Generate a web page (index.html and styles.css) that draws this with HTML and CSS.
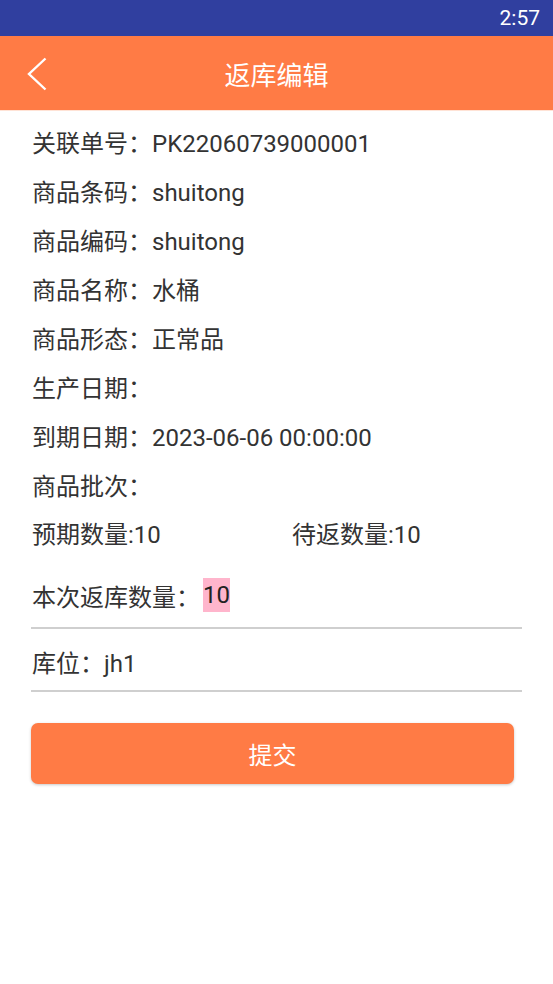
FILE: index.html
```html
<!DOCTYPE html>
<html lang="zh">
<head>
<meta charset="utf-8">
<title>返库编辑</title>
<link rel="stylesheet" href="styles.css">
</head>
<body>
<div class="status"><span class="time">2:57</span></div>
<header class="toolbar">
  <svg class="back" width="24" height="36" viewBox="0 0 24 36"><polyline points="18.5,2.5 2,18 18.5,33.5" fill="none" stroke="#fff" stroke-width="2.4"/></svg>
  <h1 class="title">返库编辑</h1>
</header>
<div class="divider"></div>
<main class="content">
  <div class="row">关联单号：PK22060739000001</div>
  <div class="row">商品条码：shuitong</div>
  <div class="row">商品编码：shuitong</div>
  <div class="row">商品名称：水桶</div>
  <div class="row">商品形态：正常品</div>
  <div class="row">生产日期：</div>
  <div class="row">到期日期：2023-06-06 00:00:00</div>
  <div class="row">商品批次：</div>
  <div class="row qty"><span>预期数量:10</span><span>待返数量:10</span></div>
  <div class="field first"><span class="label">本次返库数量：</span><span class="sel">10</span></div>
  <div class="field second"><span class="label">库位：jh1</span></div>
  <button class="submit">提交</button>
</main>
</body>
</html>
```

FILE: styles.css
```css
html, body {
  margin: 0;
  padding: 0;
  background: #fff;
}
body {
  width: 553px;
  height: 984px;
  font-family: Roboto, "Noto Sans CJK SC", sans-serif;
  color: #333;
}
.status {
  height: 36px;
  background: #303f9f;
  display: flex;
  justify-content: flex-end;
  align-items: center;
  padding-right: 13px;
}
.time {
  color: #fff;
  font-size: 21px;
  font-family: Roboto, sans-serif;
}
.toolbar {
  height: 74px;
  background: #ff7b45;
  position: relative;
  display: flex;
  align-items: center;
  justify-content: center;
}
.back {
  position: absolute;
  left: 27px;
  top: 20px;
}
.title {
  margin: 0;
  font-weight: normal;
  font-size: 26px;
  color: #fff;
  font-family: "Noto Sans CJK SC", sans-serif;
}
.divider {
  height: 1px;
  background: #ffe3d6;
}
.content {
  padding: 8.5px 31px 0 31px;
  display: flex;
  flex-direction: column;
}
.row {
  height: 49px;
  line-height: 49px;
  font-size: 24px;
  padding-left: 1px;
  white-space: nowrap;
}
.qty {
  height: 47px;
  line-height: 47px;
  display: grid;
  grid-template-columns: 260px 1fr;
}
.field {
  display: flex;
  align-items: center;
  font-size: 24px;
  border-bottom: 2px solid #cfcfcf;
  padding-left: 1px;
}
.field.first {
  margin-top: 19.5px;
  height: 34px;
  padding-bottom: 15px;
}
.field.second {
  margin-top: 15px;
  height: 34px;
  padding-bottom: 12px;
}
.sel {
  background: #ffb5cc;
  height: 34px;
  line-height: 34px;
  padding: 0;
  margin-left: 3px;
  color: #222;
}
.submit {
  margin-top: 31px;
  margin-right: 8px;
  height: 61px;
  border: none;
  border-radius: 7px;
  background: #ff7b45;
  color: #fff;
  font-size: 24px;
  font-family: "Noto Sans CJK SC", sans-serif;
  box-shadow: 0 1px 3px rgba(0,0,0,0.22);
  padding: 0;
}
```
